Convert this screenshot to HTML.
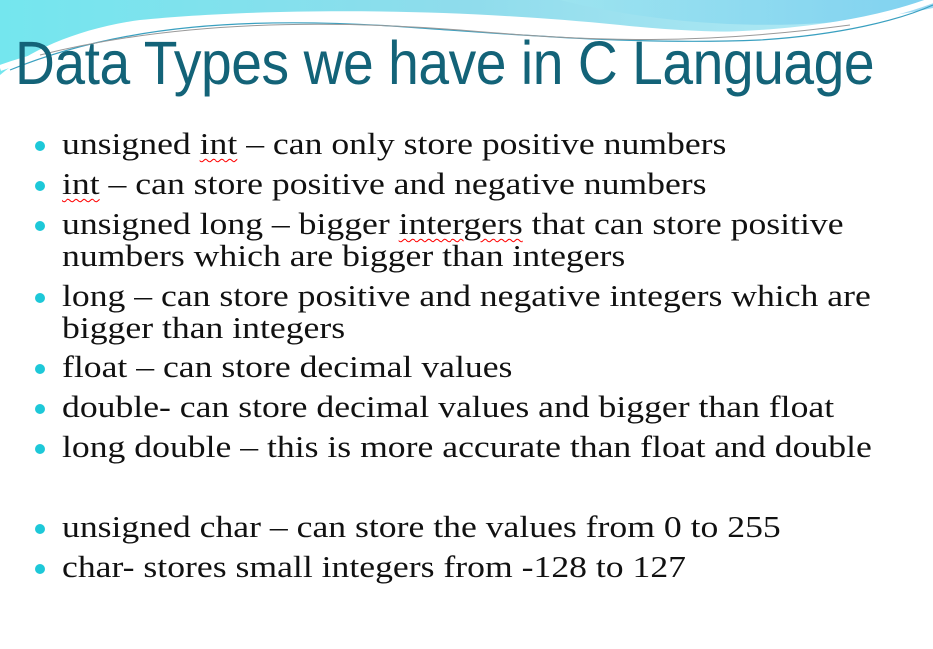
<!DOCTYPE html>
<html><head><meta charset="utf-8"><style>
html,body{margin:0;padding:0;}
body{width:933px;height:649px;position:relative;overflow:hidden;background:#fff;}
.title{position:absolute;left:15px;top:28px;font-family:"Liberation Sans",sans-serif;font-size:61px;color:#136378;white-space:nowrap;transform:scaleX(0.905);transform-origin:left top;letter-spacing:-0.5px;}
ul{position:absolute;left:0;top:0;margin:0;padding:0;list-style:none;font-family:"Liberation Serif",serif;font-size:31px;color:#111;}
li{position:absolute;left:62px;white-space:nowrap;line-height:32px;}
li span.t{display:inline-block;transform:scaleX(1.15);transform-origin:left top;}
li::before{content:"";position:absolute;left:-27px;top:13px;width:10px;height:10px;border-radius:50%;background:#1dc8d8;}
.sq{text-decoration:underline wavy red 1px;text-underline-offset:4px;}
</style></head><body>
<svg width="933" height="110" style="position:absolute;left:0;top:0">
<defs>
<linearGradient id="g1" x1="0" y1="0" x2="1" y2="0"><stop offset="0" stop-color="#74e6ee"/><stop offset="0.5" stop-color="#8fdcec"/><stop offset="1" stop-color="#b8ecf6"/></linearGradient>
<linearGradient id="g2" x1="0" y1="0" x2="1" y2="0"><stop offset="0" stop-color="#9fe6f0"/><stop offset="1" stop-color="#5cc0ec"/></linearGradient>
</defs>
<path d="M0 0 H933 V0 C880 30 760 40 620 25 C420 5 240 10 140 20 C80 28 30 50 0 75 Z" fill="url(#g1)"/>
<path d="M560 0 C640 20 780 40 933 8 V0 Z" fill="url(#g2)" opacity="0.6"/>
<path d="M0 68 C150 15 350 30 600 35 C720 38 840 35 933 0" stroke="#fff" stroke-width="6" fill="none"/>
<path d="M10 70 C120 25 250 15 420 28 C520 35 640 45 760 40 C840 35 900 20 933 5" stroke="#3aa0c0" stroke-width="1.2" fill="none"/>
<path d="M40 55 C180 20 330 20 460 30 C600 42 700 45 850 25" stroke="#999" stroke-width="1" fill="none"/>
</svg>
<div class="title">Data Types we have in C Language</div>
<ul>
<li style="top:128px"><span class="t">unsigned <span class="sq">int</span> – can only store positive numbers</span></li>
<li style="top:168px"><span class="t"><span class="sq">int</span> – can store positive and negative numbers</span></li>
<li style="top:208px"><span class="t">unsigned long – bigger <span class="sq">intergers</span> that can store positive<br>numbers which are bigger than integers</span></li>
<li style="top:280px"><span class="t">long – can store positive and negative integers which are<br>bigger than integers</span></li>
<li style="top:351px"><span class="t">float – can store decimal values</span></li>
<li style="top:391px"><span class="t">double- can store decimal values and bigger than float</span></li>
<li style="top:431px"><span class="t">long double – this is more accurate than float and double</span></li>
<li style="top:511px"><span class="t">unsigned char – can store the values from 0 to 255</span></li>
<li style="top:551px"><span class="t">char- stores small integers from -128 to 127</span></li>
</ul>
</body></html>
